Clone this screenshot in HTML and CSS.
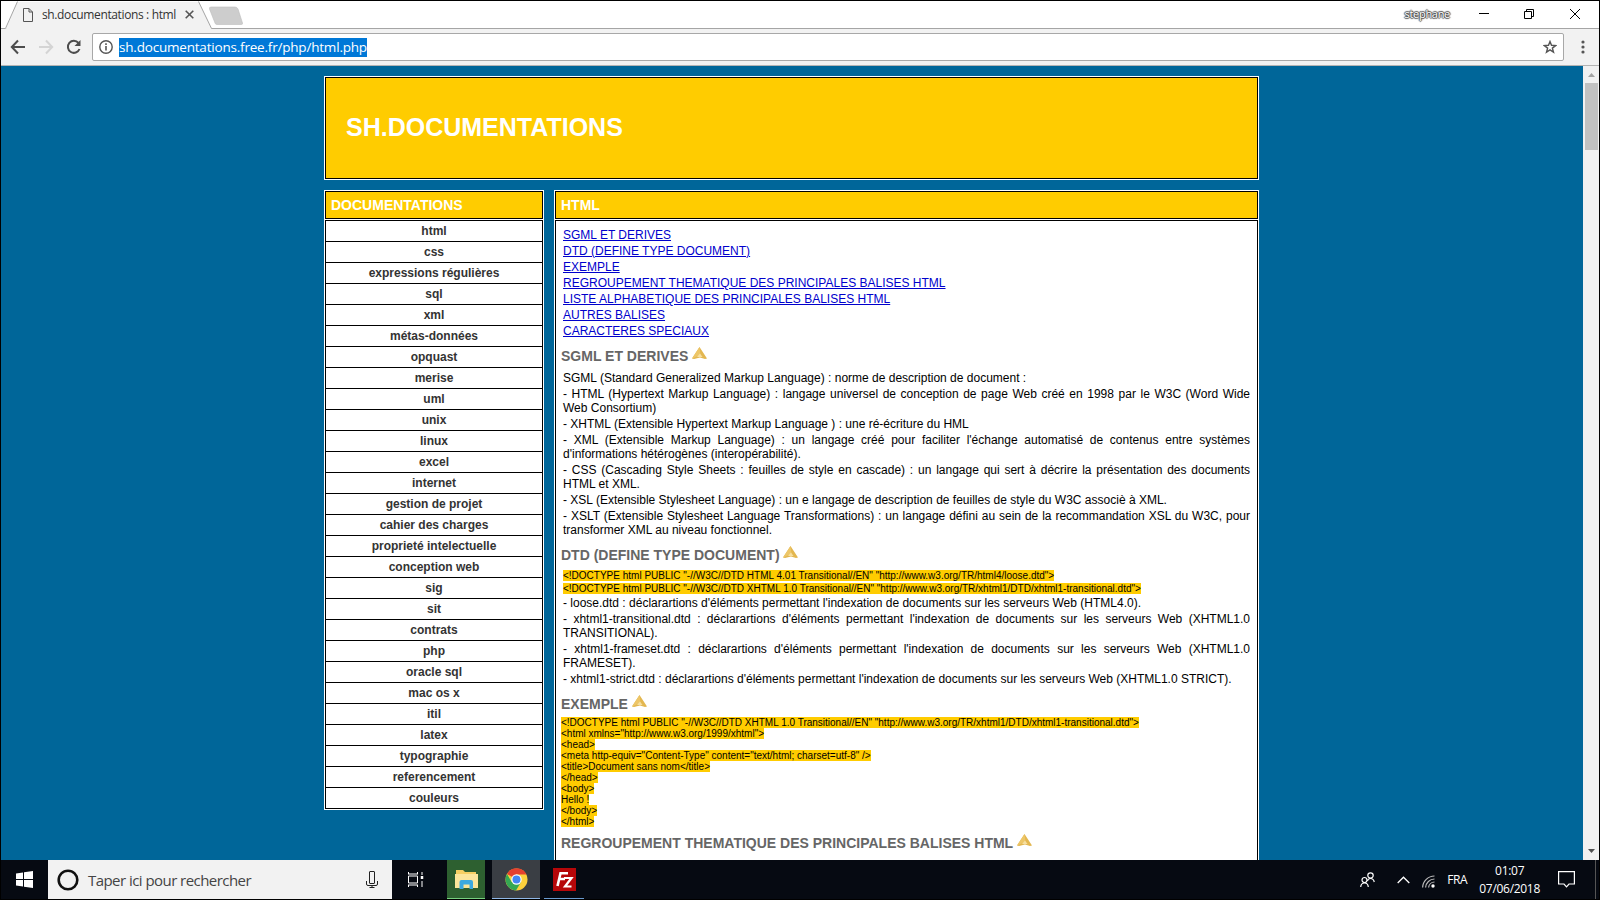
FILE: index.html
```html
<!DOCTYPE html>
<html lang="fr">
<head>
    <meta charset="UTF-8">
    <title>sh.documentations : html</title>
    <link rel="stylesheet" href="styles.css">
</head>
<body>
    <svg class="defs" width="0" height="0">
        <symbol id="haut" viewBox="0 0 15 13">
            <path d="M7.5 0 L15 11.5 L13 12 L8 10.500 L2 12 L0 11.5 Z" fill="#e3b750"/>
            <path d="M7.5 0 L8.500 8 L0 11.5 Z" fill="#edc668"/>
            <path d="M8 6.500 L10.500 10 L5 10 Z" fill="#f6dfa0"/>
        </symbol>
    </svg>
    <div class="window">
        <!-- onglets -->
        <div class="tabs">
            <svg class="tab-shape" width="250" height="28" viewBox="0 0 250 28">
                <path d="M0 28 L5 28 L16 1 L198 1 L211 28 L250 28 Z" fill="#f2f2f2"/>
                <path d="M211 28 L198 1 H250 V28 Z M0 0 H16 L5 28 H0 Z" fill="#fff"/>
                <path d="M0 27.5 H4.5 L16.5 .5 M197.500 .5 L210.500 27.5 H250" fill="none" stroke="#a5a5a5"/>
                <path d="M210 6 H234 Q236 6 237 8 L241.500 22 Q242 23.500 240 23.500 H216 Q214.500 23.500 214 22 L208.500 8 Q208 6 210 6 Z" fill="#cdcdcd" stroke="#bcbcbc" stroke-width=".6"/>
            </svg>
            <div class="tab">
                <svg width="10" height="14" viewBox="0 0 10 14" fill="none" stroke="#555"><path d="M.5 .5 H6 L9.500 4 V13.500 H.5 Z M6 .5 V4 H9.500"/></svg>
                <span class="tab-title">sh.documentations : html</span>
                <svg width="9" height="9" viewBox="0 0 9 9" stroke="#555" stroke-width="1.600"><path d="M.7 .7 L8.300 8.300 M8.300 .7 L.7 8.300"/></svg>
            </div>
            <span class="user">stephane</span>
            <svg class="controls" width="110" height="12" viewBox="0 0 110 12" fill="none" stroke="#000">
                <path d="M3 5.500 H13 M48.500 3.500 H55.500 V10.500 H48.500 Z M50.500 3 V1.500 H57.500 V8.500 H56 M94 1 L104 11 M104 1 L94 11"/>
            </svg>
        </div>
        <!-- barre d'adresse -->
        <div class="toolbar">
            <svg class="nav" width="74" height="20" viewBox="0 0 74 20" fill="none" stroke-width="2">
                <path d="M15 10 H2 M8 3.500 L1.800 10 L8 16.500" stroke="#4d4d4d"/>
                <path d="M29 10 H42 M36 3.500 L42.200 10 L36 16.500" stroke="#d4d4d4"/>
                <path d="M68.500 6 A6 6 0 1 0 69.500 12" stroke="#4d4d4d"/>
                <path d="M70.500 3 V9 H64.500 Z" fill="#4d4d4d"/>
            </svg>
            <div class="address">
                <svg width="14" height="14" viewBox="0 0 14 14"><circle cx="7" cy="7" r="6.200" fill="none" stroke="#555" stroke-width="1.400"/><path d="M6.200 6 H7.800 V10.500 H6.200 Z M6.200 3.300 H7.800 V4.900 H6.200 Z" fill="#555"/></svg>
                <span class="url">sh.documentations.free.fr/php/html.php</span>
                <svg class="star" width="14" height="14" viewBox="0 0 14 14" fill="none" stroke="#555" stroke-width="1.400"><path d="M7 1.500 L8.500 5.300 L12.600 5.600 L9.400 8.100 L10.500 12.200 L7 9.900 L3.500 12.200 L4.600 8.100 L1.400 5.600 L5.500 5.300 Z"/></svg>
            </div>
            <svg class="dots" width="4" height="14" viewBox="0 0 4 14" fill="#555"><circle cx="2" cy="2" r="1.600"/><circle cx="2" cy="7" r="1.600"/><circle cx="2" cy="12" r="1.600"/></svg>
        </div>

        <div class="view">
            <div class="page">
                <div class="header cadre"><h1>SH.DOCUMENTATIONS</h1></div>
                <div class="colonnes">
                    <div class="menu">
                        <h2 class="cadre">DOCUMENTATIONS</h2>
                        <ul>
                            <li>html</li>
                            <li>css</li>
                            <li>expressions régulières</li>
                            <li>sql</li>
                            <li>xml</li>
                            <li>métas-données</li>
                            <li>opquast</li>
                            <li>merise</li>
                            <li>uml</li>
                            <li>unix</li>
                            <li>linux</li>
                            <li>excel</li>
                            <li>internet</li>
                            <li>gestion de projet</li>
                            <li>cahier des charges</li>
                            <li>proprieté intelectuelle</li>
                            <li>conception web</li>
                            <li>sig</li>
                            <li>sit</li>
                            <li>contrats</li>
                            <li>php</li>
                            <li>oracle sql</li>
                            <li>mac os x</li>
                            <li>itil</li>
                            <li>latex</li>
                            <li>typographie</li>
                            <li>referencement</li>
                            <li>couleurs</li>
                        </ul>
                    </div>
                    <div class="contenu">
                        <h2 class="cadre">HTML</h2>
                        <div class="texte">
                            <p><a href="#sgml">SGML ET DERIVES</a></p>
                            <p><a href="#dtd">DTD (DEFINE TYPE DOCUMENT)</a></p>
                            <p><a href="#exemple">EXEMPLE</a></p>
                            <p><a href="#regroupement">REGROUPEMENT THEMATIQUE DES PRINCIPALES BALISES HTML</a></p>
                            <p><a href="#liste">LISTE ALPHABETIQUE DES PRINCIPALES BALISES HTML</a></p>
                            <p><a href="#autres">AUTRES BALISES</a></p>
                            <p><a href="#caracteres">CARACTERES SPECIAUX</a></p>

                            <h3 id="sgml">SGML ET DERIVES <svg class="haut"><use href="#haut"/></svg></h3>
                            <p>SGML (Standard Generalized Markup Language) : norme de description de document :</p>
                            <p>- HTML (Hypertext Markup Language) : langage universel de conception de page Web créé en 1998 par le W3C (Word Wide Web Consortium)</p>
                            <p>- XHTML (Extensible Hypertext Markup Language ) : une ré-écriture du HML</p>
                            <p>- XML (Extensible Markup Language) : un langage créé pour faciliter l'échange automatisé de contenus entre systèmes d'informations hétérogènes (interopérabilité).</p>
                            <p>- CSS (Cascading Style Sheets : feuilles de style en cascade) : un langage qui sert à décrire la présentation des documents HTML et XML.</p>
                            <p>- XSL (Extensible Stylesheet Language) : un e langage de description de feuilles de style du W3C associè à XML.</p>
                            <p>- XSLT (Extensible Stylesheet Language Transformations) : un langage défini au sein de la recommandation XSL du W3C, pour transformer XML au niveau fonctionnel.</p>

                            <h3 id="dtd">DTD (DEFINE TYPE DOCUMENT) <svg class="haut"><use href="#haut"/></svg></h3>
                            <p class="ligne-code"><span class="code">&lt;!DOCTYPE html PUBLIC "-//W3C//DTD HTML 4.01 Transitional//EN" "http://www.w3.org/TR/html4/loose.dtd"&gt;</span></p>
                            <p class="ligne-code"><span class="code">&lt;!DOCTYPE html PUBLIC "-//W3C//DTD XHTML 1.0 Transitional//EN" "http://www.w3.org/TR/xhtml1/DTD/xhtml1-transitional.dtd"&gt;</span></p>
                            <p>- loose.dtd : déclarartions d'éléments permettant l'indexation de documents sur les serveurs Web (HTML4.0).</p>
                            <p>- xhtml1-transitional.dtd : déclarartions d'éléments permettant l'indexation de documents sur les serveurs Web (XHTML1.0 TRANSITIONAL).</p>
                            <p>- xhtml1-frameset.dtd : déclarartions d'éléments permettant l'indexation de documents sur les serveurs Web (XHTML1.0 FRAMESET).</p>
                            <p>- xhtml1-strict.dtd : déclarartions d'éléments permettant l'indexation de documents sur les serveurs Web (XHTML1.0 STRICT).</p>

                            <h3 id="exemple">EXEMPLE <svg class="haut"><use href="#haut"/></svg></h3>
                            <div class="bloc-code"><span class="code">&lt;!DOCTYPE html PUBLIC "-//W3C//DTD XHTML 1.0 Transitional//EN" "http://www.w3.org/TR/xhtml1/DTD/xhtml1-transitional.dtd"&gt;<br>
                                &lt;html xmlns="http://www.w3.org/1999/xhtml"&gt;<br>
                                &lt;head&gt;<br>
                                &lt;meta http-equiv="Content-Type" content="text/html; charset=utf-8" /&gt;<br>
                                &lt;title&gt;Document sans nom&lt;/title&gt;<br>
                                &lt;/head&gt;<br>
                                &lt;body&gt;<br>
                                Hello !<br>
                                &lt;/body&gt;<br>
                                &lt;/html&gt;</span></div>

                            <h3 id="regroupement">REGROUPEMENT THEMATIQUE DES PRINCIPALES BALISES HTML <svg class="haut"><use href="#haut"/></svg></h3>
                        </div>
                    </div>
                </div>
            </div>
            <div class="scrollbar">
                <svg width="17" height="17" viewBox="0 0 17 17"><path d="M5 11 L8.500 7 L12 11 Z" fill="#a3a3a3"/></svg>
                <div class="thumb"></div>
                <svg width="17" height="17" viewBox="0 0 17 17"><path d="M5 6 L8.500 10 L12 6 Z" fill="#505050"/></svg>
            </div>
        </div>

        <!-- barre des tâches -->
        <div class="taskbar">
            <div class="start">
                <svg width="17" height="17" viewBox="0 0 17 17" fill="#fff"><path d="M0 2.400 L7 1.400 V8 H0 Z M8 1.200 L17 0 V8 H8 Z M0 9 H7 V15.600 L0 14.600 Z M8 9 H17 V17 L8 15.800 Z"/></svg>
            </div>
            <div class="search">
                <svg width="22" height="22" viewBox="0 0 22 22"><circle cx="11" cy="11" r="9.300" fill="none" stroke="#111" stroke-width="2.600"/></svg>
                <span>Taper ici pour rechercher</span>
                <svg width="12" height="17" viewBox="0 0 12 17" fill="none" stroke="#222"><rect x="3.500" y=".5" width="5" height="12" rx=".5"/><path d="M.5 10 V13 Q.5 14.500 2 14.500 H10 Q11.500 14.500 11.500 13 V10 M6 14 V16.500 M3.500 16.500 H8.500"/></svg>
            </div>
            <div class="app vue">
                <svg width="17" height="15" viewBox="0 0 17 15" fill="none" stroke="#fff"><path d="M1.500 4 H10.500 V11 H1.500 Z M1.500 0 V2 M10.500 0 V2 M1 2 H11 M1.500 15 V13 M10.500 15 V13 M1 13 H11 M15 0 V3 M15 9 V15"/><path d="M15 4 V7" stroke-width="2.500"/></svg>
            </div>
            <div class="app dossier">
                <svg width="23" height="20" viewBox="0 0 23 20"><path d="M1 1 H8 L10 3 H21 V18 H1 Z" fill="#f5cf63"/><path d="M0 5 H23 V19 H0 Z" fill="#fbe59b"/><path d="M4.500 20 V13 Q4.500 11 6.500 11 H16 Q18 11 18 13 V20 H14.500 V15.500 H8.500 V20 Z" fill="#3ba9e0"/></svg>
            </div>
            <div class="app chrome">
                <svg width="23" height="23" viewBox="0 0 23 23"><circle cx="11.500" cy="11.500" r="11" fill="#fcd03c"/><path d="M11.500 11.500 L2 6 A11 11 0 0 1 21.500 6.500 H11.500 Z" fill="#e5402f"/><path d="M2 6 A11 11 0 0 0 11 22.500 L16 14 L11.500 11.500 L6.700 14 Z" fill="#35a853"/><circle cx="11.500" cy="11.500" r="5.200" fill="#fff"/><circle cx="11.500" cy="11.500" r="4" fill="#4486f4"/></svg>
            </div>
            <div class="app filezilla">
                <svg width="23" height="23" viewBox="0 0 23 23"><rect width="23" height="23" fill="#b60709"/><path d="M4.500 18 L7.500 5.200 H15 M6 11 H12" fill="none" stroke="#fff" stroke-width="2.600"/><path d="M11 10 H18.500 L12 18.500 H18.500" fill="none" stroke="#fff" stroke-width="2.200"/></svg>
            </div>
            <div class="tray">
                <svg width="15" height="15" viewBox="0 0 15 15" fill="none" stroke="#fff" stroke-width="1.200"><circle cx="10.500" cy="3.500" r="2.700"/><path d="M7.500 9 Q8 6.500 10.500 6.500 Q13.500 6.500 14.300 10"/><circle cx="4.500" cy="8" r="2.500"/><path d="M.7 15 Q1 11 4.500 11 Q8 11 8.300 15"/></svg>
                <svg class="fleche" width="13" height="8" viewBox="0 0 13 8" fill="none" stroke="#fff" stroke-width="1.300"><path d="M.7 7 L6.500 1.200 L12.300 7"/></svg>
                <svg class="wifi" width="13" height="13" viewBox="0 0 13 13" fill="none" stroke="#bbb" stroke-width="1.200"><path d="M.6 12.500 A12 12 0 0 1 12.500 1 M3.600 12.500 A9 9 0 0 1 12.500 4 M6.600 12.500 A6 6 0 0 1 12.500 7"/><circle cx="11" cy="11" r="1.700" fill="#fff" stroke="none"/></svg>
                <span class="langue">FRA</span>
                <div class="horloge"><span>01:07</span><span>07/06/2018</span></div>
                <svg class="notif" width="17" height="17" viewBox="0 0 17 17" fill="none" stroke="#fff" stroke-width="1.200"><path d="M.6 .6 H16.400 V13 H11 L8.500 15.800 L6 13 H.6 Z"/></svg>
            </div>
            <div class="bureau"></div>
        </div>
    </div>
</body>
</html>
```
FILE: styles.css
```css
*{
    box-sizing: border-box;
    padding: 0;
    margin: 0;
}
body{
    width: 1600px;
    height: 900px;
    overflow: hidden;
    font-family: "Liberation Sans", Arial, sans-serif;
    font-size: 12px;
}
svg{
    display: block;
    flex-shrink: 0;
}
.defs{
    position: absolute;
}
.window{
    display: flex;
    flex-direction: column;
    width: 1600px;
    height: 900px;
    border: 1px solid #000;
    background-color: #fff;
}

/* navigateur */
.tabs{
    position: relative;
    display: flex;
    height: 28px;
    border-bottom: 1px solid #a5a5a5;
    font-family: "Open Sans", "Noto Sans", sans-serif;
}
.tab-shape{
    position: absolute;
    left: 0;
    top: 0;
}
.tab{
    position: relative;
    display: flex;
    align-items: center;
    width: 200px;
    padding-left: 22px;
    font-size: 12px;
    color: #333;
}
.tab-title{
    width: 133px;
    margin: 0 10px 0 9px;
    white-space: nowrap;
    letter-spacing: -0.37px;
}
.user{
    margin-left: auto;
    padding-top: 5px;
    font-size: 11px;
    color: #fff;
    letter-spacing: -0.3px;
    text-shadow: 1px 0 1px #444, -1px 0 1px #444, 0 1px 1px #444, 0 -1px 1px #444;
}
.controls{
    margin: 7px 13px 0 26px;
}
.toolbar{
    display: flex;
    align-items: center;
    height: 37px;
    padding: 0 14px 0 9px;
    background-color: #f2f2f2;
    border-bottom: 1px solid #b4b4b4;
}
.address{
    display: flex;
    align-items: center;
    flex: 1;
    height: 28px;
    margin: 0 17px 0 8px;
    padding: 0 6px;
    border: 1px solid #a8a8a8;
    border-radius: 2px;
    background-color: #fff;
}
.url{
    height: 19px;
    margin-left: 6px;
    line-height: 19px;
    font-family: "Open Sans", "Noto Sans", sans-serif;
    font-size: 13.5px;
    letter-spacing: -0.2px;
    white-space: nowrap;
    color: #fff;
    background-color: #0078d7;
}
.star{
    margin-left: auto;
}

/* page */
.view{
    display: flex;
    height: 794px;
    overflow: hidden;
    background-color: #069;
}
.page{
    width: 935px;
    margin: 10px 0 0 323px;
}
.scrollbar{
    display: flex;
    flex-direction: column;
    width: 16px;
    margin-left: auto;
    background-color: #f1f1f1;
}
.thumb{
    width: 13px;
    height: 67px;
    margin: 0 auto auto 2px;
    background-color: #c1c1c1;
}
.cadre{
    border: 1px solid #000;
    outline: 1px solid #fff;
    outline-offset: 0;
    background-color: #fc0;
    color: #fff;
}
.header{
    height: 102px;
    margin: 1px 1px 12px;
}
.header h1{
    padding-left: 20px;
    line-height: 98px;
    font-size: 25px;
}
.colonnes{
    display: flex;
    justify-content: space-between;
    align-items: flex-start;
}
.menu{
    width: 220px;
}
.contenu{
    width: 705px;
}
.colonnes h2{
    height: 28px;
    margin: 0 1px;
    padding-left: 5px;
    line-height: 27px;
    font-size: 14px;
}
.menu ul{
    margin-top: 1px;
    border: 1px solid #fff;
    border-top: none;
    list-style: none;
}
.menu li{
    height: 21px;
    border: 1px solid #000;
    border-bottom: none;
    background-color: #fff;
    line-height: 20px;
    font-weight: bold;
    text-align: center;
    color: #333;
}
.menu li:last-child{
    height: 22px;
    border-bottom: 1px solid #000;
}
.texte{
    height: 700px;
    margin: 1px 1px 0;
    padding: 7px 7px 0 5px;
    border: 1px solid #000;
    outline: 1px solid #fff;
    background-color: #fff;
    color: #000;
}
.texte p{
    margin: 0 0 2px 2px;
    line-height: 14px;
    text-align: justify;
}
.texte a{
    color: #00c;
}
.texte h3{
    height: 16px;
    margin: 9px 0 8px;
    line-height: 16px;
    font-size: 14px;
    color: #666;
}
.texte .ligne-code{
    line-height: 11px;
    font-size: 10px;
}
.haut{
    display: inline-block;
    width: 15px;
    height: 13px;
    vertical-align: 1px;
}
.bloc-code{
    margin-top: -2px;
    line-height: 11px;
    font-size: 10px;
}
.texte .bloc-code + h3{
    margin-top: 7px;
}
.code{
    background-color: #fc0;
}

/* barre des taches */
.taskbar{
    display: flex;
    flex: 1;
    background-color: #060a12;
    font-family: "Open Sans", "Noto Sans", sans-serif;
    color: #fff;
}
.start{
    display: flex;
    align-items: center;
    width: 47px;
    padding-left: 15px;
}
.search{
    display: flex;
    align-items: center;
    width: 344px;
    padding: 0 14px 0 9px;
    background-color: #f2f2f2;
    color: #444;
    font-size: 15px;
    letter-spacing: -0.55px;
}
.search span{
    margin: 0 auto 0 9px;
}
.app{
    display: flex;
    align-items: center;
    justify-content: center;
    border-bottom: 1px solid transparent;
}
.vue{
    width: 47px;
}
.dossier{
    width: 38px;
    margin-left: 8px;
    background-color: #2d6030;
    border-color: #76d080;
}
.chrome{
    width: 48px;
    margin: 0 4px 0 7px;
    background-color: #3a3e44;
    border-color: #8fb8e8;
}
.filezilla{
    width: 40px;
    border-color: #6a9bd0;
}
.tray{
    display: flex;
    align-items: center;
    margin-left: auto;
    padding-right: 20px;
    font-size: 12px;
    letter-spacing: -0.4px;
}
.fleche{
    margin-left: 22px;
}
.wifi{
    margin: 3px 12px 0 12px;
}
.horloge{
    display: flex;
    flex-direction: column;
    align-items: center;
    margin: 0 18px 0 12px;
    line-height: 18px;
    letter-spacing: -0.3px;
}
.bureau{
    width: 4px;
    border-left: 1px solid #555;
}
```
